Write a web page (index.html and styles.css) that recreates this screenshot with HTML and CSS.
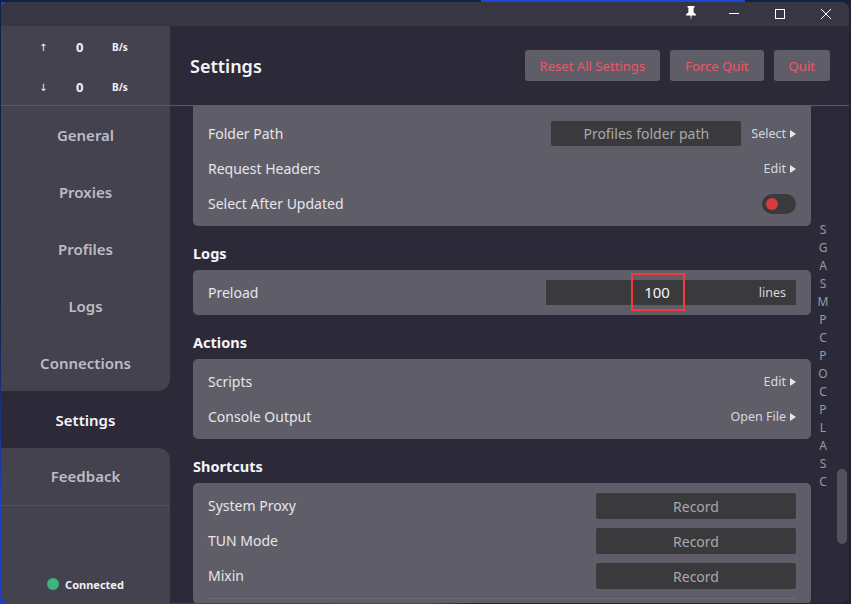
FILE: index.html
```html
<!DOCTYPE html>
<html lang="en">
<head>
    <meta charset="UTF-8">
    <meta name="viewport" content="width=device-width, initial-scale=1.0">
    <title>Settings</title>
    <link rel="stylesheet" href="styles.css">
</head>
<body>
    <div class="window">
        <div class="titlebar">
            <svg class="win-icon pin" width="12" height="16" viewBox="0 0 12 16"><path d="M2.5 1h7v1.2L8.6 3v4.2L11 9.6v1H6.6L6 15.5 5.4 10.6H1v-1l2.4-2.4V3l-.9-.8z" fill="#fff"/></svg>
            <svg class="win-icon" width="12" height="12" viewBox="0 0 12 12"><path d="M1 5.500h10" stroke="#fff" fill="none"/></svg>
            <svg class="win-icon" width="12" height="12" viewBox="0 0 12 12"><rect x="1.500" y="1.500" width="9" height="9" stroke="#fff" fill="none"/></svg>
            <svg class="win-icon" width="12" height="12" viewBox="0 0 12 12"><path d="M1 1l10 10M11 1L1 11" stroke="#fff" fill="none"/></svg>
        </div>
        <div class="app">
            <aside class="sidebar">
                <div class="traffic">
                    <div class="traffic-row"><span class="arrow">↑</span><span class="rate">0</span><span class="unit">B/s</span></div>
                    <div class="traffic-row"><span class="arrow">↓</span><span class="rate">0</span><span class="unit">B/s</span></div>
                </div>
                <nav class="nav">
                    <div class="nav-group nav-top">
                        <a class="nav-item">General</a>
                        <a class="nav-item">Proxies</a>
                        <a class="nav-item">Profiles</a>
                        <a class="nav-item">Logs</a>
                        <a class="nav-item">Connections</a>
                    </div>
                    <a class="nav-item active">Settings</a>
                    <div class="nav-group nav-bottom">
                        <a class="nav-item feedback">Feedback</a>
                        <div class="status"><span class="dot"></span>Connected</div>
                    </div>
                </nav>
            </aside>
            <main class="main">
                <header class="header">
                    <h1>Settings</h1>
                    <div class="header-actions">
                        <button class="danger">Reset All Settings</button>
                        <button class="danger">Force Quit</button>
                        <button class="danger">Quit</button>
                    </div>
                </header>
                <div class="content">
                    <div class="sections">
                        <section class="card card-first">
                            <div class="row">
                                <span>Folder Path</span>
                                <div class="row-right"><input class="field folder" placeholder="Profiles folder path"><span class="link">Select <i class="tri"></i></span></div>
                            </div>
                            <div class="row"><span>Request Headers</span><span class="link">Edit <i class="tri"></i></span></div>
                            <div class="row"><span>Select After Updated</span><span class="switch"><i></i></span></div>
                        </section>
                        <h2>Logs</h2>
                        <section class="card card-single">
                            <div class="row">
                                <span>Preload</span>
                                <div class="field preload">
                                    <span class="preload-value">100</span>
                                    <span class="preload-unit">lines</span>
                                    <span class="highlight"></span>
                                </div>
                            </div>
                        </section>
                        <h2>Actions</h2>
                        <section class="card">
                            <div class="row"><span>Scripts</span><span class="link">Edit <i class="tri"></i></span></div>
                            <div class="row"><span>Console Output</span><span class="link">Open File <i class="tri"></i></span></div>
                        </section>
                        <h2>Shortcuts</h2>
                        <section class="card">
                            <div class="row"><span>System Proxy</span><button class="field record">Record</button></div>
                            <div class="row"><span>TUN Mode</span><button class="field record">Record</button></div>
                            <div class="row"><span>Mixin</span><button class="field record">Record</button></div>
                            <div class="divider"></div>
                        </section>
                    </div>
                    <div class="rail">
                        <div class="letters">
                            <span>S</span><span>G</span><span>A</span><span>S</span><span>M</span><span>P</span><span>C</span><span>P</span><span>O</span><span>C</span><span>P</span><span>L</span><span>A</span><span>S</span><span>C</span>
                        </div>
                        <div class="scroll-thumb"></div>
                    </div>
                </div>
            </main>
        </div>
    </div>
</body>
</html>
```

FILE: styles.css
```css
* {
    box-sizing: border-box;
}
html, body {
    height: 100%;
}
body {
    margin: 0;
    overflow: hidden;
    background:
        linear-gradient(to right, #12233f 56.5%, #1c46d8 56.5%, #1c46d8 87.5%, #12233f 87.5%) top / 100% 2px no-repeat,
        linear-gradient(to bottom, #12233f 50%, #1d3fc4 85%) left / 1px 100% no-repeat,
        linear-gradient(to right, #1d3fc4 35%, #3b4a78 50%, #23232b 56%);
    font-family: "Noto Sans", "Open Sans", sans-serif;
    color: #e6e6e8;
    font-size: 14px;
}
.window {
    width: 848px;
    height: 601px;
    margin: 2px 0 0 1px;
    display: flex;
    flex-direction: column;
    border-radius: 8px;
    overflow: hidden;
    background: #2c2a38;
}
.titlebar {
    height: 24px;
    flex: none;
    background: #383643;
    display: flex;
    justify-content: flex-end;
    align-items: center;
    gap: 34px;
    padding: 0 17px 0 0;
}
.win-icon {
    display: block;
}
.pin {
    margin: 0 -3px 3px 0;
}
.app {
    flex: 1;
    display: flex;
    min-height: 0;
}
.sidebar {
    width: 169px;
    flex: none;
    display: flex;
    flex-direction: column;
}
.traffic {
    height: 80px;
    padding-top: 1px;
    background: #43424e;
    border-bottom: 1px solid #5b5a64;
}
.traffic-row {
    height: 40px;
    display: flex;
    align-items: center;
    font-weight: 700;
    font-size: 13px;
    color: #f2f2f4;
}
.arrow {
    width: 75px;
    padding-left: 38px;
    font-family: "DejaVu Sans", sans-serif;
    font-size: 10px;
    font-weight: 400;
}
.rate {
    width: 36px;
}
.unit {
    font-size: 10px;
}
.nav {
    flex: 1;
    display: flex;
    flex-direction: column;
    min-height: 0;
}
.nav-group {
    background: #43424e;
}
.nav-top {
    border-bottom-right-radius: 12px;
}
.nav-bottom {
    flex: 1;
    border-top-right-radius: 12px;
    display: flex;
    flex-direction: column;
}
.nav-item {
    height: 57px;
    flex: none;
    display: flex;
    align-items: center;
    justify-content: center;
    font-size: 15px;
    font-weight: 600;
    color: #bdbdc3;
}
.nav-item.active {
    color: #f5f5f7;
    background: #2c2a38;
}
.feedback {
    height: 58px;
    padding-bottom: 1px;
    border-bottom: 1px solid #53525c;
}
.status {
    margin-top: auto;
    height: 34px;
    padding-bottom: 4px;
    display: flex;
    align-items: center;
    justify-content: center;
    gap: 6px;
    font-size: 11px;
    font-weight: 700;
    color: #f0f0f2;
}
.dot {
    width: 12px;
    height: 12px;
    border-radius: 50%;
    background: #3fb27f;
}
.main {
    flex: 1;
    min-width: 0;
    display: flex;
    flex-direction: column;
}
.header {
    height: 80px;
    flex: none;
    padding: 0 19px 0 20px;
    display: flex;
    align-items: center;
    justify-content: space-between;
    border-bottom: 1px solid #5b5a64;
}
h1 {
    margin: 0;
    font-size: 18px;
    font-weight: 600;
    color: #f5f5f7;
}
.header-actions {
    display: flex;
    gap: 10px;
}
button {
    font: inherit;
    border: 0;
}
.danger {
    height: 31px;
    padding: 0 15px;
    border-radius: 3px;
    background: #5f5e68;
    color: #ee5566;
    font-size: 13.100px;
}
.content {
    flex: 1;
    min-height: 0;
    display: flex;
    overflow: hidden;
    padding-left: 23px;
}
.sections {
    width: 618px;
    flex: none;
}
.card {
    background: #5f5e68;
    border-radius: 5px;
    padding: 5px 15px;
}
.card-first {
    padding-top: 10px;
    border-radius: 0 0 5px 5px;
}
.card-single {
    padding: 10px 15px;
}
h2 {
    margin: 17px 0 7px;
    font-size: 14.500px;
    line-height: 20px;
    font-weight: 700;
    color: #f5f5f7;
}
.row {
    height: 35px;
    display: flex;
    align-items: center;
    justify-content: space-between;
}
.card-single .row {
    height: 25px;
}
.row-right {
    display: flex;
    align-items: center;
    gap: 10px;
}
.divider {
    margin-top: 5px;
    height: 1px;
    background: #6c6b75;
}
.field {
    background: #3a3a3c;
    border: 0;
    border-radius: 2px;
    height: 25px;
    font: inherit;
    color: #a9a9ad;
    text-align: center;
}
.folder {
    width: 190px;
    outline: none;
}
.folder::placeholder {
    color: #a9a9ad;
    opacity: 1;
}
.link {
    font-size: 12.500px;
    color: #d8d8dc;
    display: inline-flex;
    align-items: center;
    gap: 4px;
}
.tri {
    width: 0;
    height: 0;
    border-left: 6px solid #e6e6e8;
    border-top: 4px solid transparent;
    border-bottom: 4px solid transparent;
}
.switch {
    width: 34px;
    height: 20px;
    border-radius: 10px;
    background: #3a3a3c;
    display: flex;
    align-items: center;
    padding-left: 4px;
}
.switch i {
    width: 12px;
    height: 12px;
    border-radius: 50%;
    background: #d83a3f;
}
.preload {
    width: 250px;
    position: relative;
    display: flex;
    align-items: center;
    justify-content: flex-end;
    padding-right: 10px;
    border-radius: 0;
}
.preload-value {
    position: absolute;
    left: 0;
    right: 28px;
    top: 2px;
    text-align: center;
    color: #f5f5f7;
    font-size: 15px;
}
.preload-unit {
    font-size: 12.500px;
    color: #d8d8dc;
}
.highlight {
    position: absolute;
    left: 85px;
    top: -7px;
    width: 54px;
    height: 38px;
    border: 2px solid #f43b3b;
}
.record {
    width: 200px;
    height: 26px;
    margin-top: 1px;
}
.rail {
    flex: 1;
    position: relative;
}
.letters {
    position: absolute;
    left: 0;
    width: 24px;
    top: 115px;
    display: flex;
    flex-direction: column;
    align-items: center;
    font-size: 12px;
    line-height: 18px;
    color: #9a99a3;
}
.scroll-thumb {
    position: absolute;
    left: 26px;
    top: 363px;
    width: 10px;
    height: 75px;
    border-radius: 5px;
    background: #53525c;
}
```
